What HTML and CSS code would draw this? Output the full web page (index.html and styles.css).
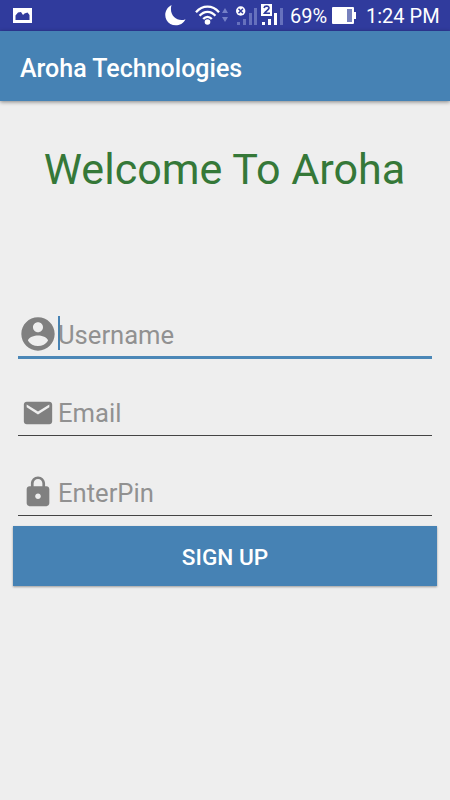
FILE: index.html
```html
<!DOCTYPE html>
<html lang="en">
<head>
<meta charset="utf-8">
<title>Aroha Technologies</title>
<link rel="stylesheet" href="styles.css">
</head>
<body>
<div class="status">
  <svg class="picture" width="19" height="15" viewBox="0 0 19 15"><path fill="#fff" fill-rule="evenodd" d="M0 0h19v15H0zM2.500 12h14V7l-2-2.500-3 1-1.500 1.500-2-3-3 .5-2.500 3z"/></svg>
  <svg class="moon" width="21" height="21" viewBox="0 0 21 21"><path fill="#fff" d="M6.500 0C.5 3.200-1.200 10 1.500 15c3.500 7 15 7.500 19-.8C13 17.500 3.500 11 6.500 0z"/></svg>
  <svg class="wifi" width="25" height="20" viewBox="0 0 25 20"><g fill="none" stroke="#fff" stroke-width="2.300"><path d="M1 7.200C7.500-.2 17.500-.2 24 7.200M4.600 10.800c4.600-5.300 11.200-5.300 15.800 0M8.200 14.100c2.700-3.100 5.900-3.100 8.600 0"/></g><circle cx="12.500" cy="17" r="2.800" fill="#fff"/></svg>
  <svg class="traffic" width="6" height="16" viewBox="0 0 6 16"><path fill="#7580c7" d="M0 6l3-5 3 5zM0 10h6l-3 5z"/></svg>
  <svg class="signal" width="22" height="21" viewBox="0 0 22 21"><path fill="#6671bd" d="M1 17h3v3H1zM7 14h3v6H7zM13 8h3v12h-3zM18 3h3v17h-3z"/><circle cx="4.700" cy="6" r="4.700" fill="#fff"/><path stroke="#303b9d" stroke-width="1.500" d="M2.500 3.800l4.400 4.400m0-4.400L2.500 8.200"/></svg>
  <svg class="signal2" width="23" height="22" viewBox="0 0 23 22"><path fill="#fff" d="M1 18h3v3H1zM7 15h3v6H7zM13 9h3v12h-3zM0 0h11v12H0z"/><path fill="#6671bd" d="M19 4h3v17h-3z"/><path fill="none" stroke="#303b9d" stroke-width="1.600" d="M3 4C3.500 1.500 8.300 1.500 8 4.200c-.2 1.600-3 3-4.500 5h5.500"/></svg>
  <span class="percent">69%</span>
  <svg class="battery" width="25" height="17" viewBox="0 0 25 17"><path fill="#fff" d="M1 0h20a1 1 0 0 1 1 1v4h2v7h-2v4a1 1 0 0 1-1 1H1a1 1 0 0 1-1-1V1a1 1 0 0 1 1-1z"/><path fill="#7781bd" d="M15 2h5v13h-5z"/></svg>
  <span class="time">1:24 PM</span>
</div>
<header class="toolbar">Aroha Technologies</header>
<main>
  <h1 class="welcome">Welcome To Aroha</h1>
  <div class="field active">
    <svg class="icon" width="40" height="40" viewBox="0 0 24 24"><path d="M12 2C6.480 2 2 6.480 2 12s4.480 10 10 10 10-4.480 10-10S17.520 2 12 2zm0 3c1.660 0 3 1.340 3 3s-1.340 3-3 3-3-1.340-3-3 1.340-3 3-3zm0 14.200c-2.500 0-4.710-1.280-6-3.220.03-1.990 4-3.080 6-3.080 1.990 0 5.970 1.090 6 3.080-1.290 1.940-3.500 3.220-6 3.220z"/></svg>
    <span class="hint">Username</span>
  </div>
  <div class="field email">
    <svg class="icon" width="34" height="34" viewBox="0 0 24 24"><path d="M20 4H4c-1.100 0-1.990.9-1.990 2L2 18c0 1.100.9 2 2 2h16c1.100 0 2-.9 2-2V6c0-1.100-.9-2-2-2zm0 4l-8 5-8-5V6l8 5 8-5v2z"/></svg>
    <span class="hint">Email</span>
  </div>
  <div class="field pin">
    <svg class="icon" width="34" height="34" viewBox="0 0 24 24"><path d="M18 8h-1V6c0-2.760-2.240-5-5-5S7 3.240 7 6v2H6c-1.100 0-2 .9-2 2v10c0 1.100.9 2 2 2h12c1.100 0 2-.9 2-2V10c0-1.100-.9-2-2-2zm-6 9c-1.100 0-2-.9-2-2s.9-2 2-2 2 .9 2 2-.9 2-2 2zm3.100-9H8.900V6c0-1.710 1.390-3.100 3.100-3.100s3.100 1.390 3.100 3.100v2z"/></svg>
    <span class="hint">EnterPin</span>
  </div>
  <button class="signup">SIGN UP</button>
</main>
</body>
</html>
```
FILE: styles.css
```css
* { box-sizing: border-box; }
body {
  margin: 0;
  height: 800px;
  overflow: hidden;
  background: #eee;
  font-family: Roboto, sans-serif;
}
.status {
  display: flex;
  align-items: flex-start;
  height: 31px;
  padding-left: 13px;
  background: #303b9d;
  color: #fff;
  font-size: 20px;
  line-height: 33px;
  white-space: nowrap;
}
.status svg { flex: none; }
.picture { margin-top: 8px; }
.moon { margin: 5px 0 0 133px; }
.wifi { margin: 5px 0 0 9px; }
.traffic { margin: 7px 0 0 2px; }
.signal { margin: 5px 0 0 8px; }
.signal2 { margin: 4px 0 0 3px; }
.percent { width: 38px; margin-left: 6px; }
.battery { margin: 7px 0 0 4px; }
.time { margin-left: 9px; }
.toolbar {
  height: 70px;
  padding-left: 20px;
  background: #4682b4;
  box-shadow: 0 1px 4px rgba(0, 0, 0, .45);
  color: #fff;
  font-size: 25px;
  font-weight: 500;
  line-height: 75px;
}
main {
  display: flex;
  flex-direction: column;
  padding: 0 13px;
}
.welcome {
  margin: 39px 0 0 -1px;
  height: 60px;
  color: #357838;
  font-size: 43.100px;
  font-weight: 400;
  line-height: 60px;
  text-align: center;
  white-space: nowrap;
}
.field {
  display: flex;
  align-items: center;
  height: 47px;
  margin: 0 5px;
  border-bottom: 1px solid #444;
  color: #919191;
  font-size: 25.600px;
}
.field.active {
  margin-top: 110px;
  height: 49px;
  border-bottom: 3px solid #4b87b7;
}
.field.email { margin-top: 30px; }
.field.pin { margin-top: 33px; }
.icon { flex: none; margin: 1px 3.500px 0 2.500px; fill: #808080; }
.active .icon { margin: 1px .5px 0 -.5px; }
.pin .icon { margin-top: 0; }
.hint { line-height: 34px; padding-top: 2px; }
.active .hint {
  padding-top: 3px;
  background: linear-gradient(#4682b4, #4682b4) 0 1px / 2px 34px no-repeat;
}
.signup {
  height: 60px;
  margin-top: 10px;
  padding: 3px 0 0;
  border: 0;
  background: #4682b4;
  box-shadow: 0 1px 2px rgba(0, 0, 0, .35);
  color: #fff;
  font: 500 22.600px/57px Roboto, sans-serif;
}
```
